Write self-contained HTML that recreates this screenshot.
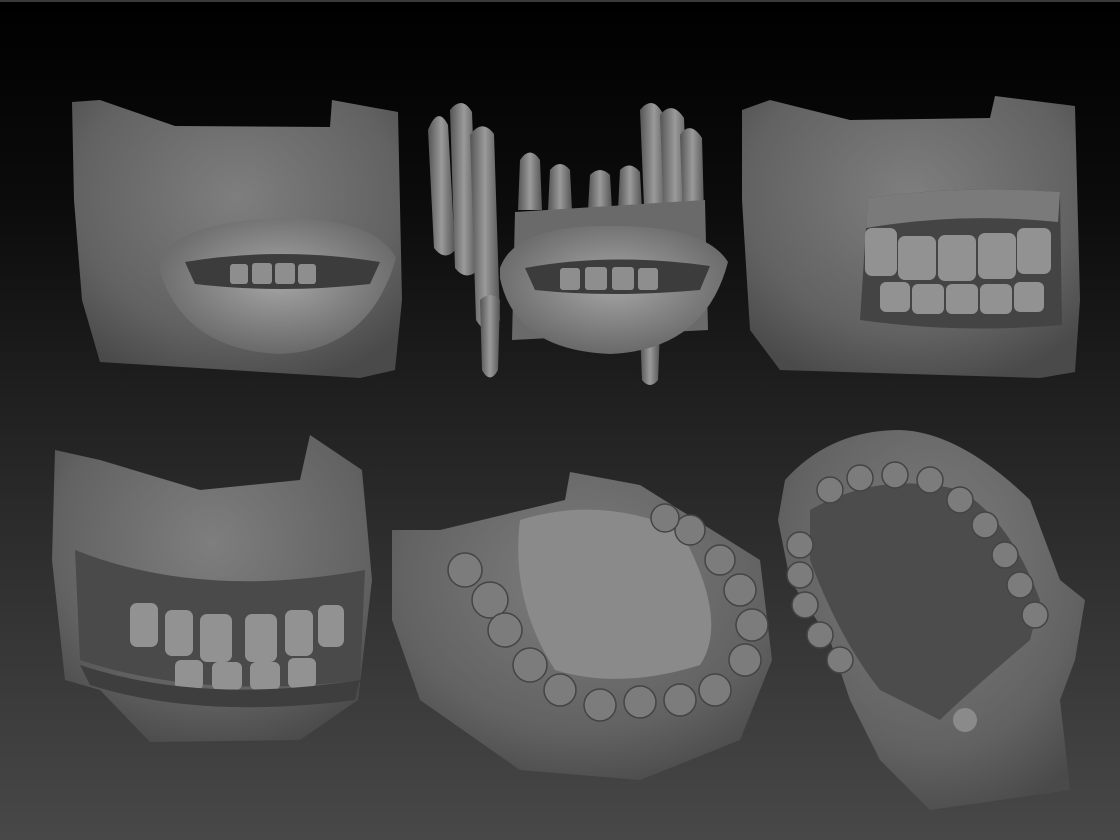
<!DOCTYPE html>
<html><head><meta charset="utf-8"><style>
html,body{margin:0;padding:0;width:1120px;height:840px;overflow:hidden;background:#000}
svg{display:block}
</style></head><body>
<svg width="1120" height="840" viewBox="0 0 1120 840" xmlns="http://www.w3.org/2000/svg">
<defs>
<linearGradient id="bg" x1="0" y1="0" x2="0" y2="1">
<stop offset="0" stop-color="#000"/><stop offset="0.25" stop-color="#0c0c0c"/><stop offset="0.55" stop-color="#262626"/><stop offset="1" stop-color="#484848"/>
</linearGradient>
<radialGradient id="g1" cx="0.5" cy="0.35" r="0.7">
<stop offset="0" stop-color="#7e7e7e"/><stop offset="0.7" stop-color="#626262"/><stop offset="1" stop-color="#4a4a4a"/>
</radialGradient>
<radialGradient id="lip" cx="0.5" cy="0.45" r="0.6">
<stop offset="0" stop-color="#a6a6a6"/><stop offset="1" stop-color="#636363"/>
</radialGradient>
<linearGradient id="tooth" x1="0" y1="0" x2="1" y2="0">
<stop offset="0" stop-color="#555"/><stop offset="0.5" stop-color="#9a9a9a"/><stop offset="1" stop-color="#555"/>
</linearGradient>
</defs>
<rect width="1120" height="840" fill="url(#bg)"/>
<rect width="1120" height="2" fill="#3a3a3a"/>

<!-- top-left band -->
<path d="M72 102 L100 100 L175 126 L330 127 L332 100 L398 112 L402 300 L395 370 L360 378 L100 362 L82 300 L74 200 Z" fill="url(#g1)"/>
<path d="M160 262 Q175 222 280 218 Q375 218 396 258 Q370 350 280 354 Q185 350 160 272 Z" fill="url(#lip)"/>
<path d="M185 262 Q280 246 380 262 L370 284 Q280 294 195 284 Z" fill="#3c3c3c"/>
<g fill="#8e8e8e"><rect x="230" y="264" width="18" height="20" rx="3"/><rect x="252" y="263" width="20" height="21" rx="3"/><rect x="275" y="263" width="20" height="21" rx="3"/><rect x="298" y="264" width="18" height="20" rx="3"/></g>

<!-- top-middle teeth -->
<g fill="url(#tooth)">
<path d="M428 130 Q438 105 448 125 L455 250 Q445 262 434 248 Z"/>
<path d="M450 110 Q462 95 472 112 L478 270 Q466 282 455 268 Z"/>
<path d="M470 135 Q482 118 494 134 L500 320 Q488 340 476 320 Z"/>
<path d="M640 110 Q652 95 662 112 L668 230 Q656 240 645 230 Z"/>
<path d="M660 115 Q672 100 684 118 L690 280 Q678 292 666 278 Z"/>
<path d="M680 135 Q690 120 702 138 L705 250 Q694 262 684 250 Z"/>
<path d="M520 160 Q530 145 540 160 L542 210 L518 210 Z"/>
<path d="M550 170 Q560 158 570 170 L572 210 L548 210 Z"/>
<path d="M590 175 Q600 165 610 175 L612 210 L588 210 Z"/>
<path d="M620 170 Q630 160 640 172 L642 210 L618 210 Z"/>
<path d="M480 300 Q490 290 500 300 L498 370 Q490 385 482 370 Z"/>
<path d="M640 330 Q650 320 660 330 L658 380 Q650 390 642 380 Z"/>
</g>
<path d="M515 212 L705 200 L708 330 L512 340 Z" fill="#6a6a6a"/>
<path d="M500 268 Q515 225 610 226 Q705 225 728 262 Q705 350 610 354 Q515 350 500 278 Z" fill="url(#lip)"/>
<path d="M525 268 Q610 252 710 266 L700 290 Q610 298 535 290 Z" fill="#3c3c3c"/>
<g fill="#8e8e8e"><rect x="560" y="268" width="20" height="22" rx="3"/><rect x="585" y="267" width="22" height="23" rx="3"/><rect x="612" y="267" width="22" height="23" rx="3"/><rect x="638" y="268" width="20" height="22" rx="3"/></g>

<!-- top-right band -->
<path d="M742 110 L770 100 L850 120 L990 118 L995 96 L1075 106 L1080 300 L1075 372 L1040 378 L780 370 L750 330 L742 200 Z" fill="url(#g1)"/>
<path d="M868 198 Q960 185 1060 192 L1062 325 Q960 334 860 320 Z" fill="#444"/>
<g fill="#929292">
<rect x="865" y="228" width="32" height="48" rx="7"/><rect x="898" y="236" width="38" height="44" rx="7"/><rect x="938" y="235" width="38" height="46" rx="7"/><rect x="978" y="233" width="38" height="46" rx="7"/><rect x="1017" y="228" width="34" height="46" rx="7"/>
<rect x="880" y="282" width="30" height="30" rx="6"/><rect x="912" y="284" width="32" height="30" rx="6"/><rect x="946" y="284" width="32" height="30" rx="6"/><rect x="980" y="284" width="32" height="30" rx="6"/><rect x="1014" y="282" width="30" height="30" rx="6"/>
</g>
<path d="M868 198 Q960 185 1060 192 L1058 222 Q960 212 866 228 Z" fill="#7a7a7a"/>

<!-- bottom-left -->
<path d="M55 450 L100 460 L200 490 L300 480 L310 435 L362 470 L372 580 L358 700 L300 740 L150 742 L100 690 L65 680 L52 560 Z" fill="url(#g1)"/>
<path d="M75 550 Q200 600 365 570 L360 680 Q200 700 80 660 Z" fill="#4a4a4a"/>
<g fill="#929292">
<rect x="165" y="610" width="28" height="46" rx="7"/><rect x="200" y="614" width="32" height="48" rx="7"/><rect x="245" y="614" width="32" height="48" rx="7"/><rect x="285" y="610" width="28" height="46" rx="7"/><rect x="130" y="603" width="28" height="44" rx="7"/><rect x="318" y="605" width="26" height="42" rx="7"/>
<rect x="175" y="660" width="28" height="30" rx="6"/><rect x="212" y="662" width="30" height="28" rx="6"/><rect x="250" y="662" width="30" height="28" rx="6"/><rect x="288" y="658" width="28" height="30" rx="6"/>
</g>
<path d="M80 665 Q200 705 360 680 L355 700 Q200 720 90 685 Z" fill="#3e3e3e"/>

<!-- bottom-middle -->
<path d="M392 530 L440 530 L565 500 L570 472 L640 485 L680 510 L760 560 L772 660 L740 740 L640 780 L520 770 L420 700 L392 620 Z" fill="url(#g1)"/>
<path d="M520 520 Q600 495 680 530 Q730 620 700 665 Q620 690 555 670 Q510 600 520 520 Z" fill="#8a8a8a"/>
<g fill="#7c7c7c" stroke="#444" stroke-width="1.5">
<circle cx="465" cy="570" r="17"/><circle cx="490" cy="600" r="18"/><circle cx="505" cy="630" r="17"/><circle cx="530" cy="665" r="17"/><circle cx="560" cy="690" r="16"/>
<circle cx="600" cy="705" r="16"/><circle cx="640" cy="702" r="16"/><circle cx="680" cy="700" r="16"/><circle cx="715" cy="690" r="16"/><circle cx="745" cy="660" r="16"/><circle cx="752" cy="625" r="16"/><circle cx="740" cy="590" r="16"/><circle cx="720" cy="560" r="15"/><circle cx="690" cy="530" r="15"/><circle cx="665" cy="518" r="14"/>
</g>

<!-- bottom-right -->
<path d="M785 480 Q830 430 900 430 Q960 432 1030 500 L1060 580 L1085 600 L1075 660 L1060 700 L1070 790 L930 810 L880 760 L850 700 L830 640 L790 580 L778 520 Z" fill="url(#g1)"/>
<path d="M810 510 Q880 470 960 490 Q1010 520 1040 600 L1030 640 Q960 700 940 720 L880 690 Q840 640 810 560 Z" fill="#4c4c4c"/>
<g fill="#7c7c7c" stroke="#444" stroke-width="1.5">
<circle cx="800" cy="545" r="13"/><circle cx="800" cy="575" r="13"/><circle cx="805" cy="605" r="13"/><circle cx="820" cy="635" r="13"/><circle cx="840" cy="660" r="13"/>
<circle cx="830" cy="490" r="13"/><circle cx="860" cy="478" r="13"/><circle cx="895" cy="475" r="13"/><circle cx="930" cy="480" r="13"/><circle cx="960" cy="500" r="13"/><circle cx="985" cy="525" r="13"/><circle cx="1005" cy="555" r="13"/><circle cx="1020" cy="585" r="13"/><circle cx="1035" cy="615" r="13"/>
</g>
<circle cx="965" cy="720" r="12" fill="#8a8a8a"/>
</svg>
</body></html>
